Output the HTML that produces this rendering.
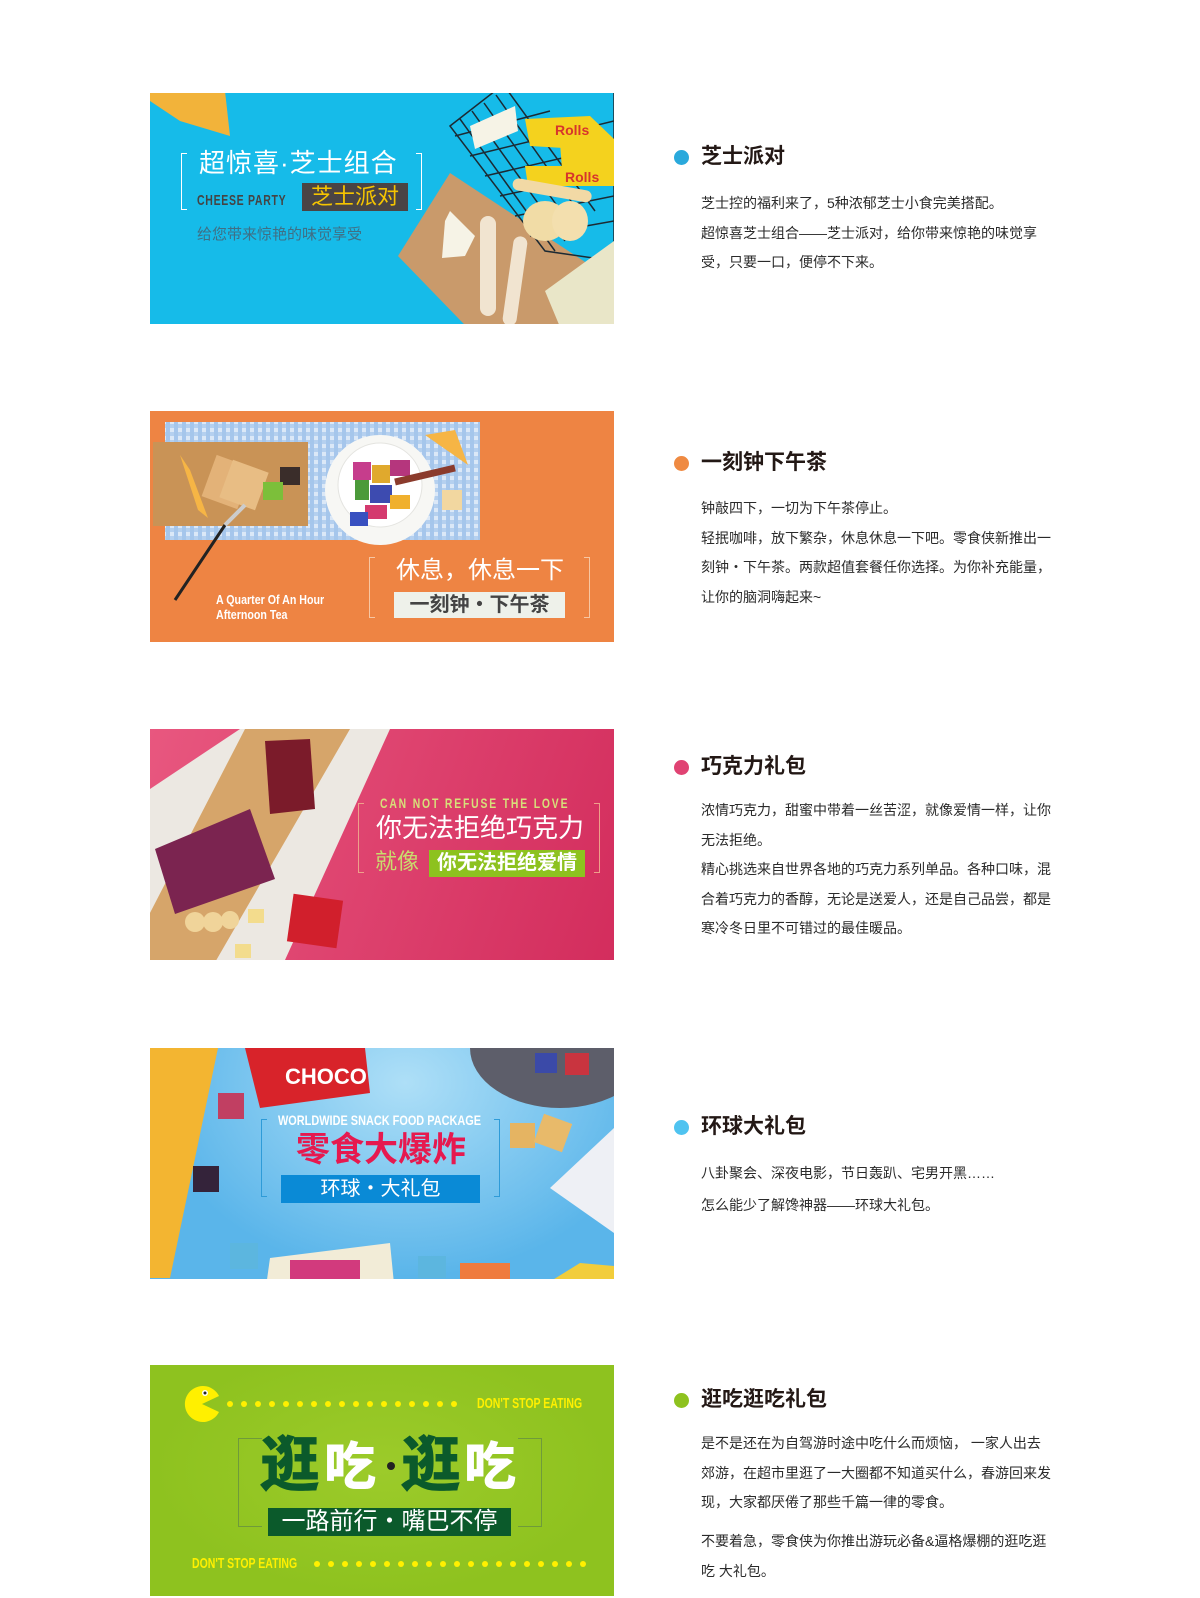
<!DOCTYPE html>
<html><head><meta charset="utf-8">
<style>
*{margin:0;padding:0;box-sizing:border-box}
body{width:1200px;height:1598px;background:#fff;position:relative;overflow:hidden;font-family:"Liberation Sans","Noto Sans CJK SC",sans-serif;}
.b{position:absolute;left:150px;width:464px;height:231px;overflow:hidden}
.in{position:absolute;left:0;width:464px;height:270px}
.b svg{position:absolute;left:0;top:0}
.t{position:absolute;white-space:nowrap;line-height:1}
.dot{position:absolute;left:674px;width:15px;height:15px;border-radius:50%}
.h{position:absolute;left:701px;font-size:21px;font-weight:bold;color:#231815;line-height:1;white-space:nowrap}
.p{position:absolute;left:701px;font-size:14px;color:#2a2a2a;line-height:29.5px;white-space:nowrap}
.br{position:absolute;border:1px solid}
.brl{border-right:none}.brr{border-left:none}
.cond{font-weight:bold;transform-origin:left top}
</style></head><body>

<!-- Banner 1 -->
<div class="b" style="top:93px;background:#16bbe9"><div class="in" style="top:-2px">
<svg width="464" height="260">
<polygon points="0,0 75,0 80,45 30,30 0,10" fill="#f2b33a"/>
<polygon points="248,165 300,82 464,190 464,260 340,260" fill="#c99a6b"/>
<g stroke="#1c2a33" stroke-width="1.5" fill="none">
<polygon points="300,35 345,0 464,0 464,170 395,160"/>
<path d="M310,28 L405,160 M322,20 L415,150 M334,12 L425,140 M346,4 L435,130 M358,0 L445,120 M305,45 L400,20 M320,65 L464,30 M335,85 L464,55 M350,105 L464,80 M365,125 L464,105 M380,145 L464,130"/>
</g>
<polygon points="375,28 440,25 464,48 464,60 380,55" fill="#f4d21e"/>
<polygon points="410,52 464,50 464,78 412,78" fill="#f4d21e"/>
<polygon points="375,75 464,75 464,95 378,95" fill="#f4d21e"/>
<text x="405" y="44" font-size="14" font-weight="bold" fill="#d7352c" font-family="Liberation Sans">Rolls</text>
<text x="415" y="91" font-size="14" font-weight="bold" fill="#d7352c" font-family="Liberation Sans">Rolls</text>
<polygon points="320,35 365,15 368,40 325,58" fill="#f6f3e6"/>
<polygon points="295,130 300,120 325,145 315,165 292,167" fill="#f6f3e6"/>
<rect x="330" y="125" width="16" height="100" rx="8" fill="#f1e4d0"/>
<rect x="358" y="145" width="14" height="90" rx="7" fill="#f1e4d0" transform="rotate(8 365 190)"/>
<ellipse cx="395" cy="130" rx="22" ry="20" fill="#f1dca6"/>
<ellipse cx="420" cy="130" rx="18" ry="20" fill="#f3dfae"/>
<rect x="362" y="93" width="80" height="12" rx="6" fill="#f2d9a5" transform="rotate(10 400 100)"/>
<polygon points="395,200 464,150 464,260 420,260" fill="#e9e6c8"/>
</svg>
<div class="br brl" style="left:31px;top:62px;width:6px;height:57px;border-color:#fff"></div>
<div class="br brr" style="left:266px;top:62px;width:6px;height:57px;border-color:#fff"></div>
<div class="t" style="left:49px;top:59px;font-size:26px;letter-spacing:1px;color:#fff">超惊喜·芝士组合</div>
<div class="t cond" style="left:47px;top:102px;font-size:15px;color:#444;letter-spacing:1px;transform:scaleX(.7)">CHEESE PARTY</div>
<div class="t" style="left:152px;top:92px;width:106px;height:28px;background:#4a4444;color:#f5c400;font-size:22px;text-align:center;line-height:28px">芝士派对</div>
<div class="t" style="left:47px;top:136px;font-size:15px;color:#3f6f85">给您带来惊艳的味觉享受</div>
</div></div>

<div class="dot" style="top:150px;background:#2aa9dc"></div>
<div class="h" style="top:146px">芝士派对</div>
<div class="p" style="top:189px">芝士控的福利来了，5种浓郁芝士小食完美搭配。<br>超惊喜芝士组合——芝士派对，给你带来惊艳的味觉享<br>受，只要一口，便停不下来。</div>

<!-- Banner 2 -->
<div class="b" style="top:411px;background:#ee8443"><div class="in" style="top:-11px">
<svg width="464" height="260">
<defs><pattern id="g" width="8" height="8" patternUnits="userSpaceOnUse"><rect width="8" height="8" fill="#dbe8f7"/><rect width="4" height="8" fill="#a6c6ec"/><rect width="8" height="4" fill="#a6c6ec" opacity=".7"/></pattern></defs>
<rect x="15" y="22" width="315" height="118" fill="url(#g)"/>
<rect x="3" y="42" width="155" height="84" fill="#c99356"/>
<polygon points="30,55 48,110 58,118 40,70" fill="#f6b545"/>
<rect x="58" y="60" width="38" height="44" fill="#e3b278" transform="rotate(20 77 82)"/>
<rect x="75" y="65" width="38" height="40" fill="#e8bd84" transform="rotate(20 94 85)"/>
<rect x="130" y="67" width="20" height="18" fill="#3a2d2a"/>
<rect x="113" y="82" width="20" height="18" fill="#7cbf3a"/>
<line x1="25" y1="200" x2="75" y2="125" stroke="#222" stroke-width="3"/>
<line x1="75" y1="125" x2="95" y2="105" stroke="#ccc" stroke-width="4"/>
<circle cx="230" cy="90" r="55" fill="#f7f7f4"/>
<circle cx="230" cy="85" r="42" fill="#fff" stroke="#e4e4e0"/>
<rect x="203" y="62" width="18" height="18" fill="#c63d8c"/><rect x="222" y="65" width="18" height="18" fill="#e0a92d"/>
<rect x="205" y="80" width="14" height="20" fill="#4b9a3a"/><rect x="220" y="85" width="22" height="18" fill="#3d4bb0"/>
<rect x="215" y="105" width="22" height="14" fill="#d43a6e"/><rect x="240" y="60" width="20" height="16" fill="#b5367d"/>
<rect x="240" y="95" width="20" height="14" fill="#f0b02e"/><rect x="200" y="112" width="18" height="14" fill="#3850c0"/>
<line x1="245" y1="82" x2="305" y2="68" stroke="#8b3b2c" stroke-width="7"/>
<polygon points="275,35 305,30 318,65" fill="#f6b545"/>
<rect x="292" y="90" width="20" height="20" fill="#f2d7a0"/>
</svg>
<div class="t cond" style="left:66px;top:192px;font-size:13px;color:#fff;line-height:15px;transform:scaleX(.82)">A Quarter Of An Hour<br>Afternoon Tea</div>
<div class="br brl" style="left:219px;top:157px;width:6px;height:61px;border-color:#f7c6a2"></div>
<div class="br brr" style="left:434px;top:157px;width:6px;height:61px;border-color:#f7c6a2"></div>
<div class="t" style="left:230px;top:159px;width:200px;text-align:center;font-size:24px;color:#fff">休息，休息一下</div>
<div class="t" style="left:244px;top:192px;width:171px;height:26px;background:#eef1ea;color:#444;font-size:20px;font-weight:bold;text-align:center;line-height:26px">一刻钟・下午茶</div>
</div></div>

<div class="dot" style="top:456px;background:#ef8a42"></div>
<div class="h" style="top:452px">一刻钟下午茶</div>
<div class="p" style="top:494px">钟敲四下，一切为下午茶停止。<br>轻抿咖啡，放下繁杂，休息休息一下吧。零食侠新推出一<br>刻钟・下午茶。两款超值套餐任你选择。为你补充能量，<br>让你的脑洞嗨起来~</div>

<!-- Banner 3 -->
<div class="b" style="top:729px;background:linear-gradient(110deg,#e8577f,#d32d5d)"><div class="in" style="top:-18px">
<svg width="464" height="260">
<polygon points="0,78 90,18 240,18 130,260 0,260" fill="#ece8e2"/>
<polygon points="95,18 200,18 60,260 -30,260" fill="#d6a56a"/>
<polygon points="115,30 160,28 165,98 120,103" fill="#7b1b2a"/>
<polygon points="5,138 100,98 125,168 25,203" fill="#7b2450"/>
<rect x="140" y="186" width="50" height="48" fill="#d11f2c" transform="rotate(8 165 210)"/>
<circle cx="45" cy="211" r="10" fill="#f0d49a"/><circle cx="63" cy="211" r="10" fill="#f0d49a"/><circle cx="80" cy="209" r="9" fill="#f0d49a"/>
<rect x="98" y="198" width="16" height="14" fill="#f3dc8d"/><rect x="85" y="233" width="16" height="14" fill="#f3dc8d"/>
</svg>
<div class="br brl" style="left:208px;top:92px;width:6px;height:70px;border-color:#eea08a"></div>
<div class="br brr" style="left:444px;top:92px;width:6px;height:70px;border-color:#eea08a"></div>
<div class="t cond" style="left:230px;top:85px;font-size:14px;color:#d7e07a;letter-spacing:2.5px;transform:scaleX(.74)">CAN NOT REFUSE THE LOVE</div>
<div class="t" style="left:210px;top:104px;width:240px;text-align:center;font-size:26px;color:#fff">你无法拒绝巧克力</div>
<div class="t" style="left:225px;top:140px;font-size:22px;color:#c9dc6d">就像</div>
<div class="t" style="left:279px;top:139px;width:156px;height:27px;background:#8dc21f;color:#fff;font-size:20px;font-weight:bold;text-align:center;line-height:27px">你无法拒绝爱情</div>
</div></div>

<div class="dot" style="top:760px;background:#e04373"></div>
<div class="h" style="top:756px">巧克力礼包</div>
<div class="p" style="top:796px">浓情巧克力，甜蜜中带着一丝苦涩，就像爱情一样，让你<br>无法拒绝。<br>精心挑选来自世界各地的巧克力系列单品。各种口味，混<br>合着巧克力的香醇，无论是送爱人，还是自己品尝，都是<br>寒冷冬日里不可错过的最佳暖品。</div>

<!-- Banner 4 -->
<div class="b" style="top:1048px;background:radial-gradient(ellipse at 55% 15%,#aedff7,#5ab5ea 70%)"><div class="in" style="top:-24px">
<svg width="464" height="270">
<polygon points="0,24 68,24 20,254 0,254" fill="#f3b531"/>
<polygon points="95,24 215,24 220,69 110,84" fill="#d8232a"/>
<text x="135" y="60" font-size="22" font-weight="bold" fill="#fff" font-family="Liberation Sans">CHOCO</text>
<rect x="68" y="69" width="26" height="26" fill="#c13f62"/>
<rect x="43" y="142" width="26" height="26" fill="#34233a"/>
<ellipse cx="410" cy="24" rx="90" ry="60" fill="#5d5e6a"/>
<rect x="385" y="29" width="22" height="20" fill="#3b4aa8"/><rect x="415" y="29" width="24" height="22" fill="#c9343f"/>
<rect x="360" y="99" width="25" height="25" fill="#e5b462"/><rect x="388" y="94" width="30" height="30" fill="#e8ba6a" transform="rotate(20 403 109)"/>
<polygon points="400,164 464,104 464,209" fill="#eef0f5"/>
<rect x="80" y="219" width="28" height="26" fill="#5cb6df"/>
<polygon points="120,234 240,219 245,270 115,270" fill="#f2ecd7"/>
<rect x="140" y="236" width="70" height="34" fill="#d23a7d"/>
<rect x="268" y="232" width="28" height="22" fill="#5cb6df"/>
<rect x="310" y="239" width="50" height="30" fill="#ef7b3e"/>
<polygon points="380,270 430,239 464,242 464,270" fill="#f2cd3b"/>
</svg>
<div class="br brl" style="left:111px;top:95px;width:6px;height:78px;border-color:#2e9bd8"></div>
<div class="br brr" style="left:344px;top:95px;width:6px;height:78px;border-color:#2e9bd8"></div>
<div class="t cond" style="left:128px;top:89px;font-size:14px;color:#fff;transform:scaleX(.78)">WORLDWIDE SNACK FOOD PACKAGE</div>
<div class="t" style="left:112px;top:109px;width:238px;text-align:center;font-size:34px;font-weight:bold;color:#e6194f">零食大爆炸</div>
<div class="t" style="left:131px;top:151px;width:199px;height:28px;background:#0a8ad6;color:#fff;font-size:20px;text-align:center;line-height:28px">环球・大礼包</div>
</div></div>

<div class="dot" style="top:1120px;background:#4fc3f0"></div>
<div class="h" style="top:1116px">环球大礼包</div>
<div class="p" style="top:1157px;line-height:32px">八卦聚会、深夜电影，节日轰趴、宅男开黑……<br>怎么能少了解馋神器——环球大礼包。</div>

<!-- Banner 5 -->
<div class="b" style="top:1365px;background:radial-gradient(ellipse at 50% 45%,#9ccb2a,#8ec21f 70%)"><div class="in" style="top:-25px">
<svg width="464" height="270">
<path d="M52,64 L69,56 A18,18 0 1 0 69,72 Z" fill="#fff000"/>
<circle cx="55" cy="53" r="3" fill="#fff"/><circle cx="55" cy="53" r="1.5" fill="#222"/>
<g fill="#fff000">
<circle cx="80" cy="64" r="3"/><circle cx="94" cy="64" r="3"/><circle cx="108" cy="64" r="3"/><circle cx="122" cy="64" r="3"/><circle cx="136" cy="64" r="3"/><circle cx="150" cy="64" r="3"/><circle cx="164" cy="64" r="3"/><circle cx="178" cy="64" r="3"/><circle cx="192" cy="64" r="3"/><circle cx="206" cy="64" r="3"/><circle cx="220" cy="64" r="3"/><circle cx="234" cy="64" r="3"/><circle cx="248" cy="64" r="3"/><circle cx="262" cy="64" r="3"/><circle cx="276" cy="64" r="3"/><circle cx="290" cy="64" r="3"/><circle cx="304" cy="64" r="3"/>
<circle cx="167" cy="224" r="3"/><circle cx="181" cy="224" r="3"/><circle cx="195" cy="224" r="3"/><circle cx="209" cy="224" r="3"/><circle cx="223" cy="224" r="3"/><circle cx="237" cy="224" r="3"/><circle cx="251" cy="224" r="3"/><circle cx="265" cy="224" r="3"/><circle cx="279" cy="224" r="3"/><circle cx="293" cy="224" r="3"/><circle cx="307" cy="224" r="3"/><circle cx="321" cy="224" r="3"/><circle cx="335" cy="224" r="3"/><circle cx="349" cy="224" r="3"/><circle cx="363" cy="224" r="3"/><circle cx="377" cy="224" r="3"/><circle cx="391" cy="224" r="3"/><circle cx="405" cy="224" r="3"/><circle cx="419" cy="224" r="3"/><circle cx="433" cy="224" r="3"/>
</g>
<circle cx="241" cy="126" r="4" fill="#222"/>
</svg>
<div class="t cond" style="left:327px;top:56px;font-size:15px;color:#fff000;transform:scaleX(.7)">DON'T STOP EATING</div>
<div class="t cond" style="left:42px;top:216px;font-size:15px;color:#fff000;transform:scaleX(.7)">DON'T STOP EATING</div>
<div class="br brl" style="left:88px;top:98px;width:24px;height:89px;border-color:#6f9b3a"></div>
<div class="br brr" style="left:368px;top:98px;width:24px;height:89px;border-color:#6f9b3a"></div>
<div class="t" style="left:110px;top:96px;font-size:60px;font-weight:900;color:#0b5a2b">逛</div>
<div class="t" style="left:174px;top:102px;font-size:52px;font-weight:900;color:#fff">吃</div>
<div class="t" style="left:251px;top:96px;font-size:60px;font-weight:900;color:#0b5a2b">逛</div>
<div class="t" style="left:314px;top:102px;font-size:52px;font-weight:900;color:#fff">吃</div>
<div class="t" style="left:118px;top:168px;width:243px;height:28px;background:#0b5a2b;color:#fff;font-size:24px;text-align:center;line-height:28px">一路前行・嘴巴不停</div>
</div></div>

<div class="dot" style="top:1393px;background:#8ec21f"></div>
<div class="h" style="top:1389px">逛吃逛吃礼包</div>
<div class="p" style="top:1429px">是不是还在为自驾游时途中吃什么而烦恼， 一家人出去<br>郊游，在超市里逛了一大圈都不知道买什么，春游回来发<br>现，大家都厌倦了那些千篇一律的零食。</div>
<div class="p" style="top:1527px">不要着急，零食侠为你推出游玩必备&amp;逼格爆棚的逛吃逛<br>吃 大礼包。</div>

</body></html>
